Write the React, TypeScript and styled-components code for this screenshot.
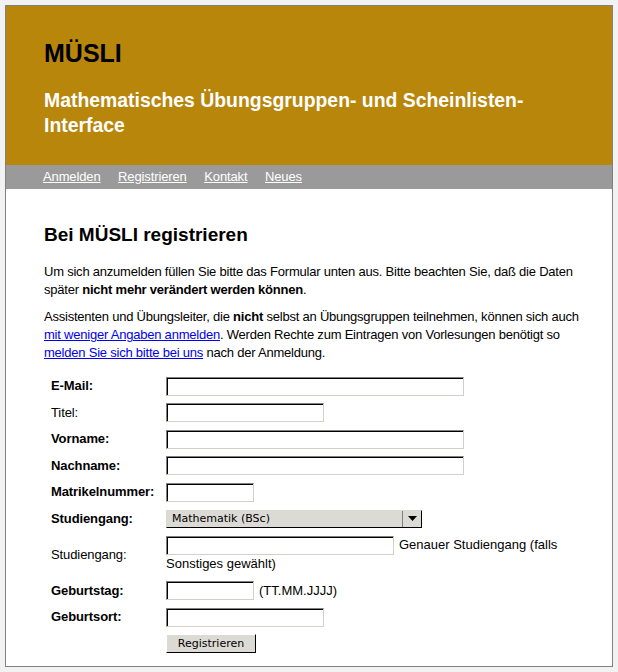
import React from "react";
import styled, { createGlobalStyle } from "styled-components";

const Global = createGlobalStyle`
  html, body { margin: 0; padding: 0; }
  body {
    background: #f2f2f2;
    padding: 5px;
    font-family: "Liberation Sans", Arial, sans-serif;
    font-size: 13px;
    color: #000;
  }
`;

const Page = styled.div`
  border: 1px solid #808080;
  background: #fff;
`;

const Header = styled.header`
  background: #b8860b;
  padding: 32px 38px 27px;
`;

const Title = styled.h1`
  margin: 0;
  font-size: 25px;
  line-height: 30px;
  font-weight: bold;
  color: #000;
`;

const Subtitle = styled.h2`
  margin: 20px 0 0;
  font-size: 19.4px;
  line-height: 25px;
  font-weight: bold;
  color: #fff;
`;

const Nav = styled.nav`
  background: #9a9a9a;
  height: 24px;
  padding: 0 37px;
  display: flex;
  gap: 17.5px;
  align-items: center;
`;

const NavLink = styled.a`
  color: #fff;
  font-size: 13px;
  line-height: 24px;
  letter-spacing: -0.12px;
  text-decoration: underline;
`;

const Content = styled.main`
  padding: 34px 30px 9px 38px;
`;

const Heading = styled.h2`
  margin: 0 0 16px;
  font-size: 19px;
  line-height: 24px;
  font-weight: bold;
`;

const Para = styled.p`
  margin: 0 0 9px;
  font-size: 13px;
  line-height: 18px;
  letter-spacing: -0.22px;
`;

const Link = styled.a`
  color: #0000ee;
  text-decoration: underline;
`;

const Form = styled.form`
  margin-top: 11px;
  display: grid;
  grid-template-columns: 122px 1fr;
  grid-template-rows: repeat(6, 26.5px) 45.5px repeat(3, 26.5px);
  align-items: center;
`;

const Label = styled.label<{ $bold?: boolean }>`
  padding-left: 7px;
  font-weight: ${(p) => (p.$bold ? "bold" : "normal")};
  line-height: 18px;
  letter-spacing: -0.1px;
`;

const Field = styled.div`
  display: flex;
  align-items: center;
`;

const Input = styled.input<{ $w: number }>`
  box-sizing: border-box;
  width: ${(p) => p.$w}px;
  height: 19px;
  margin: 0;
  padding: 1px 2px;
  vertical-align: middle;
  background: #fff;
  border-style: solid;
  border-width: 1px;
  border-color: #808080 #d4d0c8 #d4d0c8 #808080;
  box-shadow: inset 1px 1px 0 #000;
  font-family: "DejaVu Sans", sans-serif;
  font-size: 11px;
`;

const Hint = styled.span`
  margin-left: 5px;
  line-height: 18px;
`;

const WrapText = styled.div`
  width: 400px;
  line-height: 18px;
`;

const Select = styled.div`
  box-sizing: border-box;
  width: 256px;
  height: 18px;
  display: flex;
  align-items: stretch;
  background: #dcdad5;
  border-style: solid;
  border-width: 1px;
  border-color: #dcdad5 #000 #000 #dcdad5;
  font-family: "DejaVu Sans", sans-serif;
  font-size: 11px;
`;

const SelectText = styled.span`
  flex: 1;
  padding-left: 5px;
  line-height: 16px;
`;

const Arrow = styled.span`
  width: 18px;
  border-left: 1px solid #808080;
  display: flex;
  align-items: center;
  justify-content: center;
`;

const Button = styled.button`
  box-sizing: border-box;
  width: 90px;
  height: 19px;
  padding: 0;
  margin: 0;
  background: #dcdad5;
  border-style: solid;
  border-width: 1px;
  border-color: #fff #000 #000 #fff;
  font-family: "DejaVu Sans", sans-serif;
  font-size: 11px;
  color: #000;
`;

export default function App() {
  return (
    <>
      <Global />
      <Page>
        <Header>
          <Title>MÜSLI</Title>
          <Subtitle>
            Mathematisches Übungsgruppen- und Scheinlisten-
            <br />
            Interface
          </Subtitle>
        </Header>
        <Nav>
          <NavLink href="#">Anmelden</NavLink>
          <NavLink href="#">Registrieren</NavLink>
          <NavLink href="#">Kontakt</NavLink>
          <NavLink href="#">Neues</NavLink>
        </Nav>
        <Content>
          <Heading>Bei MÜSLI registrieren</Heading>
          <Para>
            Um sich anzumelden füllen Sie bitte das Formular unten aus. Bitte beachten Sie, daß die Daten
            später <b>nicht mehr verändert werden können</b>.
          </Para>
          <Para>
            Assistenten und Übungsleiter, die <b>nicht</b> selbst an Übungsgruppen teilnehmen, können sich auch{" "}
            <Link href="#">mit weniger Angaben anmelden</Link>. Werden Rechte zum Eintragen von Vorlesungen benötigt so{" "}
            <Link href="#">melden Sie sich bitte bei uns</Link> nach der Anmeldung.
          </Para>
          <Form>
            <Label $bold>E-Mail:</Label>
            <Field><Input $w={298} /></Field>
            <Label>Titel:</Label>
            <Field><Input $w={158} /></Field>
            <Label $bold>Vorname:</Label>
            <Field><Input $w={298} /></Field>
            <Label $bold>Nachname:</Label>
            <Field><Input $w={298} /></Field>
            <Label $bold>Matrikelnummer:</Label>
            <Field><Input $w={88} /></Field>
            <Label $bold>Studiengang:</Label>
            <Field>
              <Select>
                <SelectText>Mathematik (BSc)</SelectText>
                <Arrow>
                  <svg width="9" height="5" viewBox="0 0 9 5"><path d="M0 0h9L4.5 5z" fill="#000" /></svg>
                </Arrow>
              </Select>
            </Field>
            <Label>Studiengang:</Label>
            <WrapText>
              <Input $w={228} />
              <Hint>Genauer Studiengang (falls</Hint>
              <br />
              Sonstiges gewählt)
            </WrapText>
            <Label $bold>Geburtstag:</Label>
            <Field>
              <Input $w={88} />
              <Hint>(TT.MM.JJJJ)</Hint>
            </Field>
            <Label $bold>Geburtsort:</Label>
            <Field><Input $w={158} /></Field>
            <span />
            <Field><Button type="button">Registrieren</Button></Field>
          </Form>
        </Content>
      </Page>
    </>
  );
}
